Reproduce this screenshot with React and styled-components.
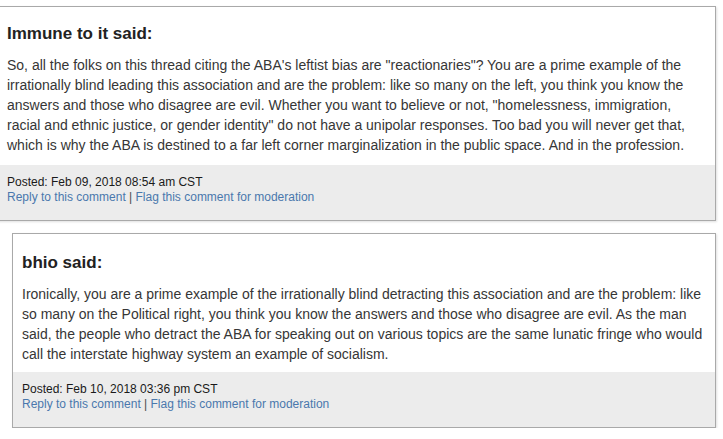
import React from "react";
import styled, { createGlobalStyle } from "styled-components";

const Global = createGlobalStyle`
  html, body { margin: 0; padding: 0; background: #fff; }
  body { font-family: "Liberation Sans", Arial, sans-serif; overflow: hidden; }
`;

const Page = styled.div`
  display: flex;
  flex-direction: column;
  gap: 12px;
  padding-top: 6px;
  width: 723px;
`;

const Card = styled.div`
  margin-left: ${(p) => p.$indent}px;
  width: ${(p) => 716 - p.$indent}px;
  box-sizing: border-box;
  border: 1px solid #a9a9a9;
  background: #fff;
  box-shadow: 1px 1px 2px rgba(0, 0, 0, 0.12);
  display: flex;
  flex-direction: column;
`;

const Main = styled.div`
  padding: ${(p) => p.$top}px 9px ${(p) => p.$bottom}px ${(p) => p.$pad}px;
`;

const Title = styled.div`
  font-size: 17px;
  font-weight: bold;
  color: #222;
  line-height: 22px;
  margin-bottom: 10px;
`;

const Body = styled.p`
  margin: 0;
  font-size: 14px;
  line-height: 20px;
  color: #363636;
  white-space: nowrap;
`;

const Footer = styled.div`
  background: #ececec;
  padding: 10px 9px 15px ${(p) => p.$pad}px;
  font-size: 12px;
  line-height: 15px;
`;

const Posted = styled.div`
  color: #1a1a1a;
`;

const Links = styled.div`
  color: #4a4a4a;
`;

const Link = styled.a`
  color: #4a78ad;
  text-decoration: none;
`;

const comments = [
  {
    author: "Immune to it",
    indent: -4,
    pad: 10,
    top: 16,
    bottom: 10,
    lines: [
      'So, all the folks on this thread citing the ABA\'s leftist bias are "reactionaries"? You are a prime example of the',
      "irrationally blind leading this association and are the problem: like so many on the left, you think you know the",
      'answers and those who disagree are evil. Whether you want to believe or not, "homelessness, immigration,',
      'racial and ethnic justice, or gender identity" do not have a unipolar responses. Too bad you will never get that,',
      "which is why the ABA is destined to a far left corner marginalization in the public space. And in the profession.",
    ],
    posted: "Feb 09, 2018 08:54 am CST",
  },
  {
    author: "bhio",
    indent: 12,
    pad: 9,
    top: 18,
    bottom: 8,
    lines: [
      "Ironically, you are a prime example of the irrationally blind detracting this association and are the problem: like",
      "so many on the Political right, you think you know the answers and those who disagree are evil. As the man",
      "said, the people who detract the ABA for speaking out on various topics are the same lunatic fringe who would",
      "call the interstate highway system an example of socialism.",
    ],
    posted: "Feb 10, 2018 03:36 pm CST",
  },
];

export default function App() {
  return (
    <>
      <Global />
      <Page>
        {comments.map((c) => (
          <Card key={c.author} $indent={c.indent}>
            <Main $pad={c.pad} $top={c.top} $bottom={c.bottom}>
              <Title>{c.author} said:</Title>
              <Body>
                {c.lines.map((l, i) => (
                  <React.Fragment key={i}>
                    {l}
                    {i < c.lines.length - 1 && <br />}
                  </React.Fragment>
                ))}
              </Body>
            </Main>
            <Footer $pad={c.pad}>
              <Posted>Posted: {c.posted}</Posted>
              <Links>
                <Link href="#">Reply to this comment</Link> |{" "}
                <Link href="#">Flag this comment for moderation</Link>
              </Links>
            </Footer>
          </Card>
        ))}
      </Page>
    </>
  );
}
